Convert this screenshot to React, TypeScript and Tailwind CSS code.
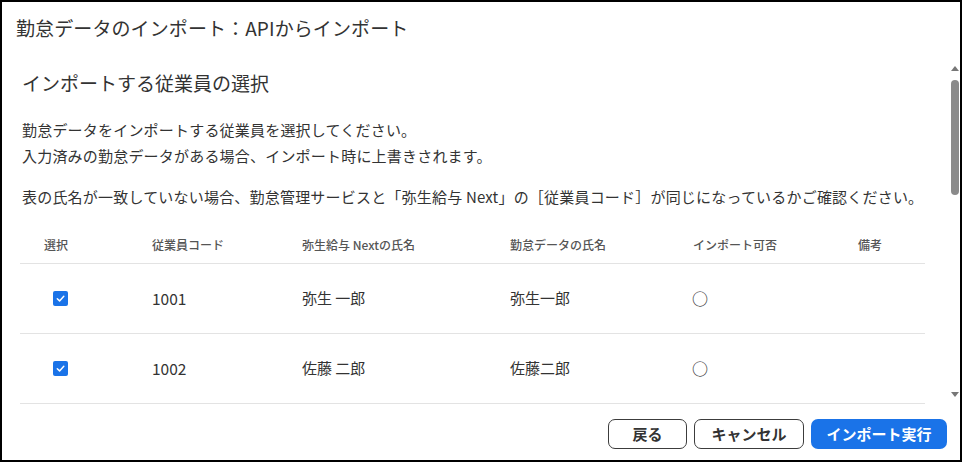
const rows = [
  { code: "1001", yayoi: "弥生 一郎", kintai: "弥生一郎", ok: "○" },
  { code: "1002", yayoi: "佐藤 二郎", kintai: "佐藤二郎", ok: "○" },
];

const cols = "grid grid-cols-[108px_150px_208px_183px_165px_91px]";

const CheckBox = () => (
  <div className="ml-[9px] flex h-[15px] w-[15px] items-center justify-center rounded-[2px] bg-[#1a73e8]">
    <svg width="11" height="11" viewBox="0 0 12 12" fill="none">
      <path d="M2.5 6.2 L5 8.6 L9.6 3.6" stroke="white" strokeWidth="1.6" strokeLinecap="round" strokeLinejoin="round" />
    </svg>
  </div>
);

const App = () => {
  return (
    <div
      className="flex h-[462px] w-[962px] flex-col border-2 border-black bg-white text-[#333]"
      style={{ fontFamily: '"Noto Sans CJK JP", "Noto Sans", sans-serif' }}
    >
      {/* title */}
      <div className="flex h-[52px] shrink-0 items-center pl-[14px]">
        <h1 className="text-[19px] leading-[28px] font-normal tracking-[0.1px]">勤怠データのインポート：APIからインポート</h1>
      </div>

      {/* scroll area */}
      <div className="flex h-[352px] shrink-0">
        <div className="flex-1 overflow-hidden px-[18px] pt-[15px]">
          <h2 className="pl-[2px] text-[19px] leading-[28px] font-normal">インポートする従業員の選択</h2>
          <div className="mt-[20px] pl-[2px] text-[15px] leading-[26px] tracking-[0.2px]">
            <p>勤怠データをインポートする従業員を選択してください。</p>
            <p>入力済みの勤怠データがある場合、インポート時に上書きされます。</p>
          </div>
          <p className="mt-[15px] pl-[2px] text-[15px] leading-[26px] tracking-[0.2px]">
            表の氏名が一致していない場合、勤怠管理サービスと「弥生給与 Next」の［従業員コード］が同じになっているかご確認ください。
          </p>

          {/* table */}
          <div className="mt-[17px] w-[905px]">
            <div className={`${cols} h-[37px] items-center border-b border-[#e3e3e3] text-[12px] font-medium text-[#555]`}>
              <div className="pl-[24px]">選択</div>
              <div className="pl-[24px]">従業員コード</div>
              <div className="pl-[24px]">弥生給与 Nextの氏名</div>
              <div className="pl-[24px]">勤怠データの氏名</div>
              <div className="pl-[24px]">インポート可否</div>
              <div className="pl-[24px]">備考</div>
            </div>
            {rows.map((r) => (
              <div key={r.code} className={`${cols} h-[70px] items-center border-b border-[#e3e3e3] text-[15px]`}>
                <div className="pl-[24px]">
                  <CheckBox />
                </div>
                <div className="pl-[24px] text-[15.5px]">{r.code}</div>
                <div className="pl-[24px]">{r.yayoi}</div>
                <div className="pl-[24px]">{r.kintai}</div>
                <div className="pl-[23px] text-[16px] font-medium leading-[16px] pb-[2px]">{r.ok}</div>
                <div className="pl-[24px]"></div>
              </div>
            ))}
          </div>
        </div>

        {/* scrollbar */}
        <div className="flex w-[14px] shrink-0 flex-col items-center pt-[12px] pb-[9px] pl-[4px]">
          <svg width="8" height="5" viewBox="0 0 8 5">
            <path d="M0 5 L4 0 L8 5 Z" fill="#777" />
          </svg>
          <div className="mt-[9px] h-[115px] w-[8px] rounded-full bg-[#8a8a8a]" />
          <div className="flex-1" />
          <svg width="8" height="5" viewBox="0 0 8 5">
            <path d="M0 0 L8 0 L4 5 Z" fill="#777" />
          </svg>
        </div>
      </div>

      {/* footer */}
      <div className="flex flex-1 items-start justify-end gap-[7px] pt-[13px] pr-[13px]">
        <button className="h-[30px] w-[79px] rounded-[7px] border-[1.5px] border-[#3c3c3c] bg-white text-[15px] font-bold text-[#333]">
          戻る
        </button>
        <button className="h-[30px] w-[110px] rounded-[7px] border-[1.5px] border-[#3c3c3c] bg-white text-[15px] font-bold text-[#333]">
          キャンセル
        </button>
        <button className="h-[30px] w-[136px] rounded-[7px] bg-[#1a73e8] text-[15px] font-bold text-white">
          インポート実行
        </button>
      </div>
    </div>
  );
};

export default App;
